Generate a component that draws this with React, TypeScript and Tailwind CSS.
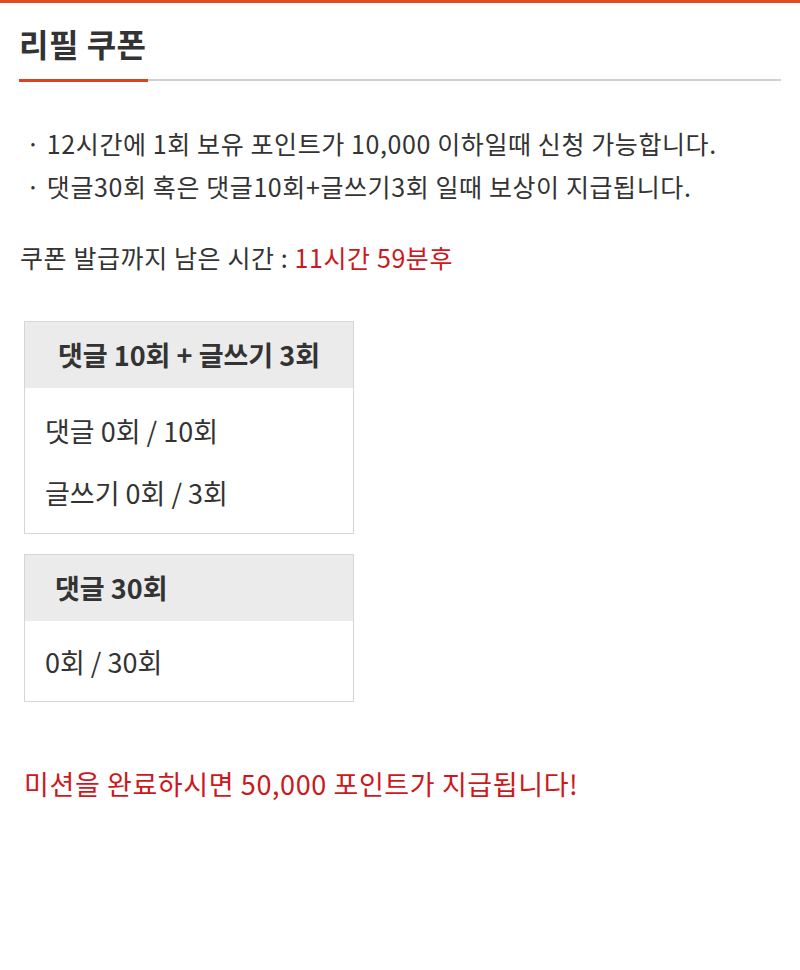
import React from 'react';

const font = { fontFamily: '"Noto Sans CJK KR", "Noto Sans", sans-serif' };

export default function App() {
  const rules = [
    '12시간에 1회 보유 포인트가 10,000 이하일때 신청 가능합니다.',
    '댓글30회 혹은 댓글10회+글쓰기3회 일때 보상이 지급됩니다.',
  ];

  return (
    <div className="min-h-[970px] w-[800px] bg-white border-t-[3px] border-[#e04a1f] text-[#333]" style={font}>
      {/* 제목 */}
      <div className="px-[19px] pt-[18px]">
        <h1 className="text-[32px] font-bold leading-[44px] text-[#333] pb-[14px] tracking-[0.5px]">리필 쿠폰</h1>
        <div className="flex">
          <div className="w-[129px] h-[3px] bg-[#d9441f]" />
          <div className="flex-1 h-[2px] bg-[#d0d0d0]" />
        </div>
      </div>

      {/* 안내 */}
      <ul className="px-[26px] pt-[40px] text-[25px] leading-[43px] text-[#333] tracking-[0.6px]">
        {rules.map((r) => (
          <li key={r}>· {r}</li>
        ))}
      </ul>

      <p className="px-[20px] pt-[28px] text-[25px] leading-[43px] tracking-[0.6px]">
        쿠폰 발급까지 남은 시간 : <span className="text-[#cc1820]">11시간 59분후</span>
      </p>

      {/* 미션 */}
      <div className="px-[24px] pt-[42px] flex flex-col gap-[20px]">
        <div className="w-[330px] border border-[#d6d6d6]">
          <div className="h-[66px] bg-[#ebebeb] flex items-center justify-center text-[27px] font-bold">
            댓글 10회 + 글쓰기 3회
          </div>
          <div className="px-[20px] pt-[21px] pb-[18px] text-[27px]">
            <p className="leading-[44px]">댓글 0회 / 10회</p>
            <p className="leading-[44px] mt-[18px]">글쓰기 0회 / 3회</p>
          </div>
        </div>

        <div className="w-[330px] border border-[#d6d6d6]">
          <div className="h-[66px] bg-[#ebebeb] flex items-center px-[30px] text-[27px] font-bold">
            댓글 30회
          </div>
          <div className="px-[20px] pt-[19px] pb-[17px] text-[27px]">
            <p className="leading-[44px]">0회 / 30회</p>
          </div>
        </div>
      </div>

      <p className="px-[24px] pt-[60px] text-[27px] leading-[44px] text-[#cc1820] tracking-[0.6px]">
        미션을 완료하시면 50,000 포인트가 지급됩니다!
      </p>
    </div>
  );
}
